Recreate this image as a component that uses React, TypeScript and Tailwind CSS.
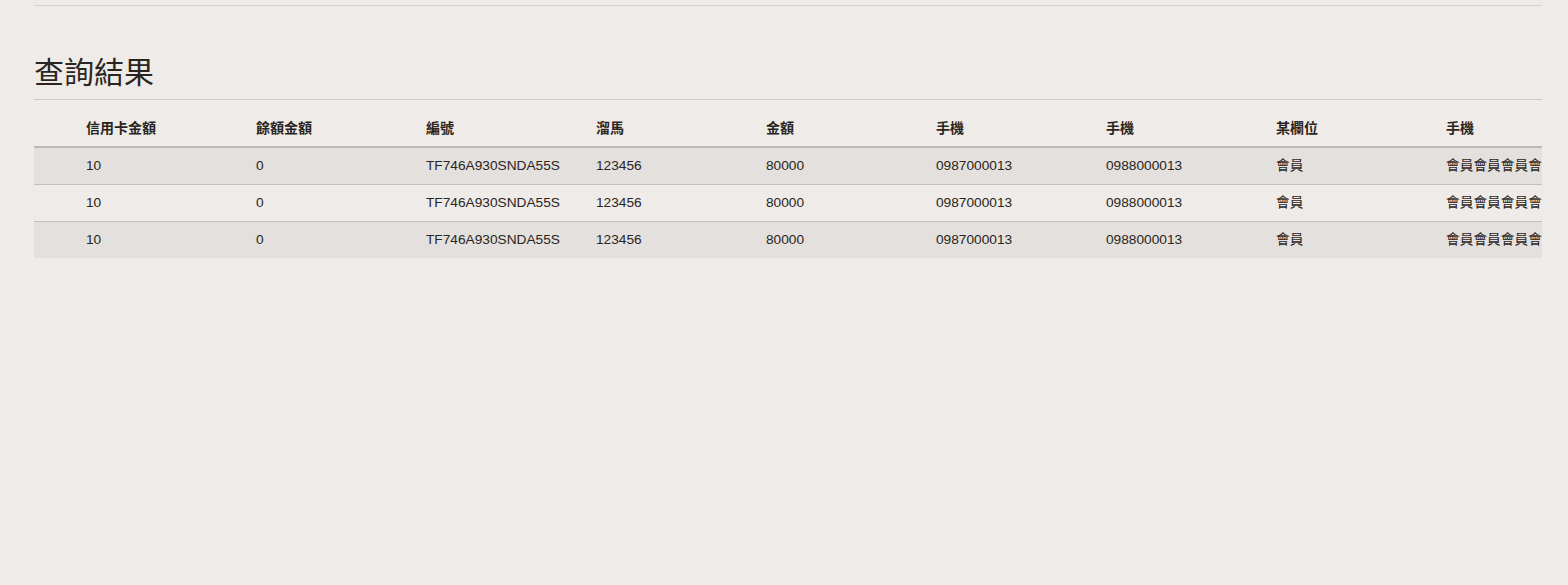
const columns = [
  "信用卡金額",
  "餘額金額",
  "編號",
  "溜馬",
  "金額",
  "手機",
  "手機",
  "某欄位",
  "手機",
];

const row = [
  "10",
  "0",
  "TF746A930SNDA55S",
  "123456",
  "80000",
  "0987000013",
  "0988000013",
  "會員",
  "會員會員會員會員會員",
];

const rows = [row, row, row];

const font = {
  fontFamily: '"Liberation Sans", "Noto Sans CJK TC", sans-serif',
};

export default function App() {
  return (
    <div
      className="h-[585px] w-[1568px] overflow-hidden bg-[#eeebe8] text-[#2b2521]"
      style={font}
    >
      <div className="mx-[34px] w-[1508px]">
        <div className="mt-[5px] h-px bg-[#d6d2ce]" />

        <h1 className="mt-[48px] h-[45px] text-[30px] leading-[38px] font-normal text-[#2b2521]">
          查詢結果
        </h1>
        <div className="h-px bg-[#cfcbc7]" />

        <div className="mt-[11px] w-[1508px] overflow-hidden">
          <table className="w-max border-collapse text-[13.7px]">
            <thead>
              <tr className="h-[36px] border-b-2 border-[#bdb9b5]">
                <th className="w-[44px] p-0" />
                {columns.map((col, i) => (
                  <th
                    key={i}
                    className="w-[170px] min-w-[170px] px-2 pb-px text-left text-[14px] font-bold whitespace-nowrap"
                  >
                    {col}
                  </th>
                ))}
              </tr>
            </thead>
            <tbody>
              {rows.map((cells, r) => (
                <tr
                  key={r}
                  className={`h-[37px] ${
                    r < rows.length - 1 ? "border-b border-[#c4c0bc]" : ""
                  } ${r % 2 === 0 ? "bg-[#e3e0dd]" : "bg-[#eeebe8]"}`}
                >
                  <td className="w-[44px] p-0" />
                  {cells.map((cell, i) => (
                    <td
                      key={i}
                      className="w-[170px] min-w-[170px] px-2 pt-[2px] text-left whitespace-nowrap"
                    >
                      {cell}
                    </td>
                  ))}
                </tr>
              ))}
            </tbody>
          </table>
        </div>
      </div>
    </div>
  );
}
